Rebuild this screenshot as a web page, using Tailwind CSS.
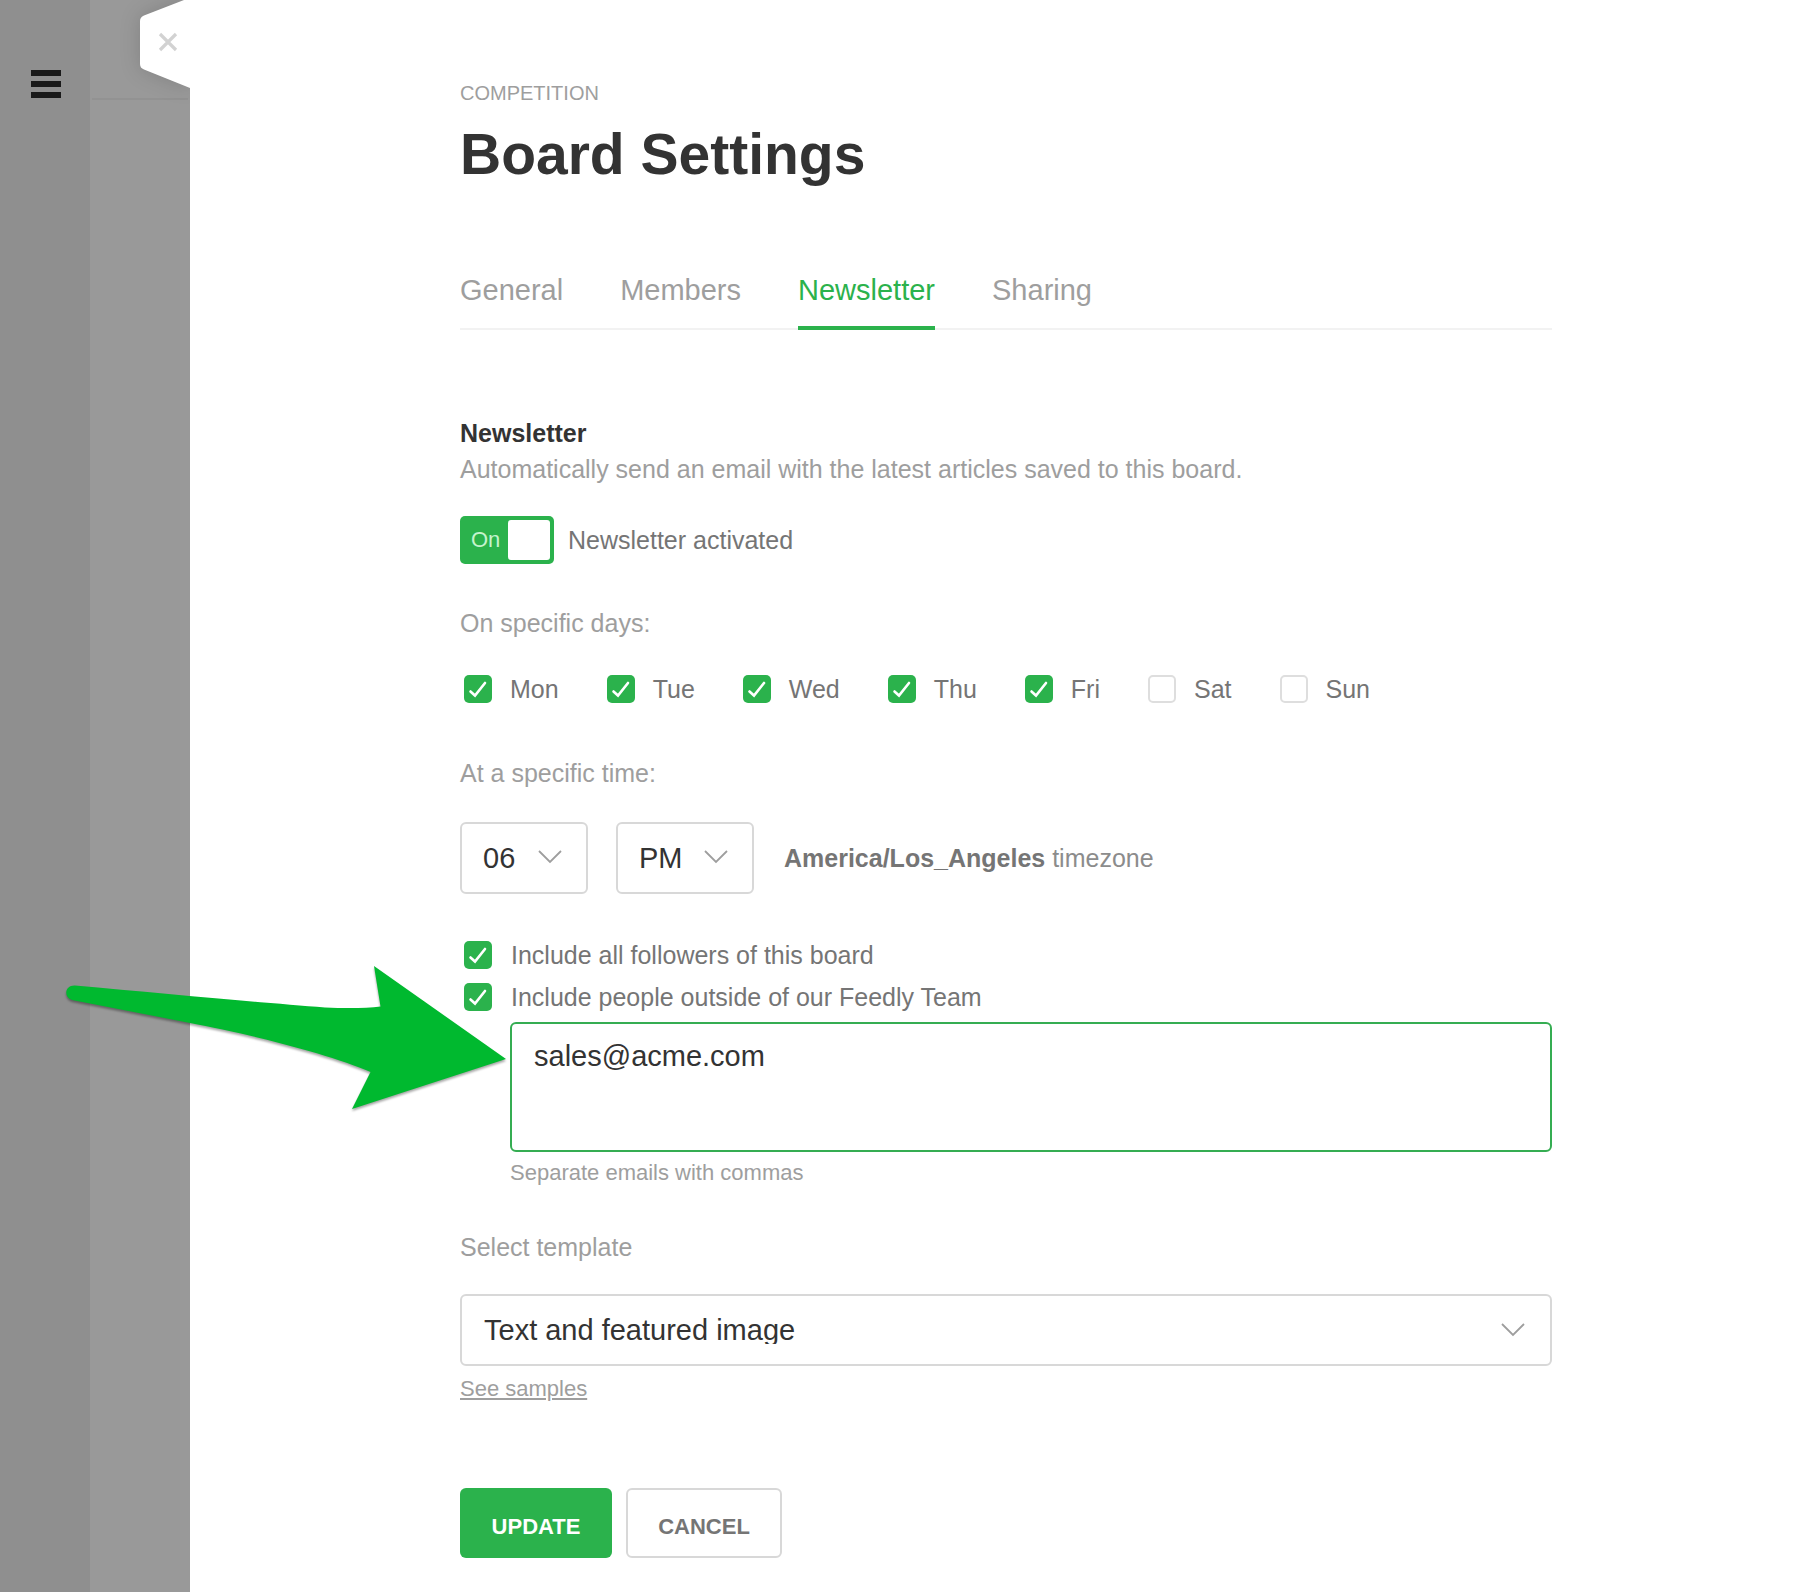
<!DOCTYPE html>
<html lang="en">
<head>
<meta charset="utf-8">
<meta name="viewport" content="width=device-width, initial-scale=1">
<title>Board Settings</title>
<script src="https://cdn.jsdelivr.net/npm/@tailwindcss/browser@4"></script>
</head>
<body class="relative flex min-h-screen bg-white font-['Liberation_Sans',Arial,sans-serif] text-[25px] leading-9 text-[#757575]">

  <!-- Shared icon shapes -->
  <svg class="hidden" aria-hidden="true">
    <symbol id="check" viewBox="0 0 28 28"><path d="M6.5 16.5 11 20.5 21 8" fill="none" stroke="#fff" stroke-width="2.6" stroke-linecap="round" stroke-linejoin="miter"/></symbol>
    <symbol id="chevron" viewBox="0 0 24 14"><path d="M1 1 12 12 23 1" fill="none" stroke="#9e9e9e" stroke-width="1.8"/></symbol>
  </svg>

  <!-- Dimmed page behind the panel -->
  <aside class="w-[90px] shrink-0 bg-[#8f8f8f] pt-[70px] pl-[31px]">
    <button type="button" aria-label="Menu" class="flex flex-col gap-[5px]">
      <span class="h-[6px] w-[30px] bg-[#1a1a1a]"></span>
      <span class="h-[6px] w-[30px] bg-[#1a1a1a]"></span>
      <span class="h-[6px] w-[30px] bg-[#1a1a1a]"></span>
    </button>
  </aside>
  <div class="relative w-[100px] shrink-0 overflow-hidden bg-[#999] px-[2px]">
    <div class="h-[100px] border-b-2 border-[#929292]"></div>
    <button type="button" aria-label="Close" class="absolute top-0 right-0">
      <svg class="h-[130px] w-[99px]" viewBox="0 0 99 130">
        <path d="M99 -5 93 0 53 15.500Q49 17 49 21V64Q49 68 53 69.500L99 88Z" fill="#fff" class="drop-shadow-[0_0_10px_rgba(0,0,0,0.15)]"/>
        <path d="M69 34 85 50M85 34 69 50" stroke="#d2d2d2" stroke-width="3.200"/>
      </svg>
    </button>
  </div>

  <!-- Settings panel -->
  <main class="min-w-0 flex-1 bg-white pt-[81px] pr-[266px] pb-[34px] pl-[270px]">
    <p class="text-[20px] leading-6 text-[#9e9e9e]">COMPETITION</p>
    <h1 class="mt-4 text-[57px] leading-[66px] font-bold text-[#333]">Board Settings</h1>

    <nav class="mt-[87px] flex gap-[57px] border-b-2 border-[#f2f2f2] text-[29px] leading-8 text-[#9e9e9e]">
      <a href="#general" class="pb-5">General</a>
      <a href="#members" class="pb-5">Members</a>
      <a href="#newsletter" aria-current="page" class="-mb-[2px] border-b-4 border-[#2bb24c] pb-5 text-[#2bb24c]">Newsletter</a>
      <a href="#sharing" class="pb-5">Sharing</a>
    </nav>

    <form>
      <h2 class="mt-[85px] font-bold text-[#333]">Newsletter</h2>
      <p class="text-[#9e9e9e]">Automatically send an email with the latest articles saved to this board.</p>

      <label class="mt-[29px] flex w-fit items-center gap-[14px]">
        <span class="grid h-12 w-[94px] rounded-[5px] bg-[#2bb24c]">
          <input type="checkbox" role="switch" checked class="col-start-1 row-start-1 h-full w-full appearance-none">
          <span class="col-start-1 row-start-1 flex items-center justify-between p-1 pl-[11px] text-[22px] leading-none text-[#c5f3cd]">On<span class="h-10 w-[42px] rounded-[3px] bg-white"></span></span>
        </span>
        <span>Newsletter activated</span>
      </label>

      <fieldset>
        <legend class="pt-[41px] text-[#9e9e9e]">On specific days:</legend>
        <div class="mt-[30px] flex gap-12 pl-1">
          <label class="flex items-center gap-[18px]"><span class="grid size-7"><input type="checkbox" checked class="col-start-1 row-start-1 size-7 appearance-none rounded-[5px] bg-[#2bb24c]"><svg class="pointer-events-none col-start-1 row-start-1 size-7"><use href="#check"/></svg></span>Mon</label>
          <label class="flex items-center gap-[18px]"><span class="grid size-7"><input type="checkbox" checked class="col-start-1 row-start-1 size-7 appearance-none rounded-[5px] bg-[#2bb24c]"><svg class="pointer-events-none col-start-1 row-start-1 size-7"><use href="#check"/></svg></span>Tue</label>
          <label class="flex items-center gap-[18px]"><span class="grid size-7"><input type="checkbox" checked class="col-start-1 row-start-1 size-7 appearance-none rounded-[5px] bg-[#2bb24c]"><svg class="pointer-events-none col-start-1 row-start-1 size-7"><use href="#check"/></svg></span>Wed</label>
          <label class="flex items-center gap-[18px]"><span class="grid size-7"><input type="checkbox" checked class="col-start-1 row-start-1 size-7 appearance-none rounded-[5px] bg-[#2bb24c]"><svg class="pointer-events-none col-start-1 row-start-1 size-7"><use href="#check"/></svg></span>Thu</label>
          <label class="flex items-center gap-[18px]"><span class="grid size-7"><input type="checkbox" checked class="col-start-1 row-start-1 size-7 appearance-none rounded-[5px] bg-[#2bb24c]"><svg class="pointer-events-none col-start-1 row-start-1 size-7"><use href="#check"/></svg></span>Fri</label>
          <label class="flex items-center gap-[18px]"><input type="checkbox" class="size-7 appearance-none rounded-[5px] border-2 border-[#dedede] bg-white">Sat</label>
          <label class="flex items-center gap-[18px]"><input type="checkbox" class="size-7 appearance-none rounded-[5px] border-2 border-[#dedede] bg-white">Sun</label>
        </div>
      </fieldset>

      <fieldset>
        <legend class="pt-12 text-[#9e9e9e]">At a specific time:</legend>
        <div class="mt-[31px] flex items-center">
          <div class="relative">
            <select aria-label="Hour" class="block h-[72px] w-[128px] appearance-none rounded-[6px] border-2 border-[#d8d8d8] bg-white px-[21px] text-[29px] text-[#333]"><option>06</option></select>
            <svg class="pointer-events-none absolute top-7 right-[26px] h-[14px] w-6"><use href="#chevron"/></svg>
          </div>
          <div class="relative ml-7">
            <select aria-label="AM or PM" class="block h-[72px] w-[138px] appearance-none rounded-[6px] border-2 border-[#d8d8d8] bg-white px-[21px] text-[29px] text-[#333]"><option>PM</option></select>
            <svg class="pointer-events-none absolute top-7 right-[26px] h-[14px] w-6"><use href="#chevron"/></svg>
          </div>
          <p class="ml-[30px] text-[#8c8c8c]"><strong class="text-[#757575]">America/Los_Angeles</strong> timezone</p>
        </div>
      </fieldset>

      <div class="mt-[43px] flex flex-col gap-[6px] pl-1">
        <label class="flex w-fit items-center gap-[19px]"><span class="grid size-7"><input type="checkbox" checked class="col-start-1 row-start-1 size-7 appearance-none rounded-[5px] bg-[#2bb24c]"><svg class="pointer-events-none col-start-1 row-start-1 size-7"><use href="#check"/></svg></span>Include all followers of this board</label>
        <label class="flex w-fit items-center gap-[19px]"><span class="grid size-7"><input type="checkbox" checked class="col-start-1 row-start-1 size-7 appearance-none rounded-[5px] bg-[#2bb24c]"><svg class="pointer-events-none col-start-1 row-start-1 size-7"><use href="#check"/></svg></span>Include people outside of our Feedly Team</label>
      </div>
      <div class="mt-[7px] pl-[50px]">
        <textarea aria-label="Emails" aria-describedby="emails-hint" class="block h-[130px] w-full resize-none rounded-[6px] border-2 border-[#35ad52] bg-white px-[22px] py-[14px] text-[29px] text-[#333] outline-none">sales@acme.com</textarea>
        <p id="emails-hint" class="mt-[7px] text-[22px] leading-7 text-[#9e9e9e]">Separate emails with commas</p>
      </div>

      <label for="template" class="mt-[42px] block text-[#9e9e9e]">Select template</label>
      <div class="relative mt-[29px]">
        <select id="template" class="block h-[72px] w-full appearance-none rounded-[6px] border-2 border-[#d8d8d8] bg-white px-[22px] pt-[18px] pb-5 text-[29px] leading-8 text-[#333]"><option>Text and featured image</option></select>
        <svg class="pointer-events-none absolute top-[29px] right-[27px] h-[14px] w-6"><use href="#chevron"/></svg>
      </div>
      <a href="#samples" class="mt-[9px] block w-fit text-[22px] leading-7 text-[#9e9e9e] underline decoration-2 underline-offset-2">See samples</a>

      <div class="mt-[85px] flex gap-[14px] text-[22px] font-bold">
        <button type="submit" class="h-[70px] w-[152px] rounded-[6px] bg-[#2bb24c] pt-[7px] text-white">UPDATE</button>
        <button type="button" class="h-[70px] w-[156px] rounded-[6px] border-2 border-[#d8d8d8] bg-white pt-[7px] text-[#757575]">CANCEL</button>
      </div>
    </form>
  </main>

  <!-- Callout arrow pointing at the email field -->
  <svg class="pointer-events-none absolute top-[956px] left-[56px] h-[164px] w-[460px] drop-shadow-[0_2px_1px_rgba(0,0,0,0.35)]" viewBox="56 956 460 164" aria-hidden="true">
    <path d="M75 985.500C160 993 262 1003 325 1007.500Q360 1009 380.500 1006.500L374 966 506 1059 352 1109 370.500 1072C330 1054 240 1032 190 1023L72 1000C63 997 65 985 75 985.500Z" fill="#00b92f"/>
  </svg>
</body>
</html>
